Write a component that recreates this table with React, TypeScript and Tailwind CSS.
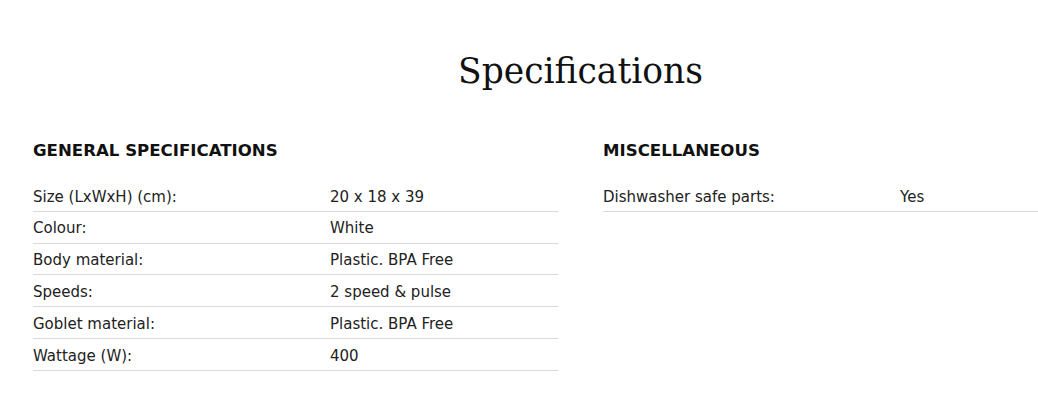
const general = [
  ["Size (LxWxH) (cm):", "20 x 18 x 39"],
  ["Colour:", "White"],
  ["Body material:", "Plastic. BPA Free"],
  ["Speeds:", "2 speed & pulse"],
  ["Goblet material:", "Plastic. BPA Free"],
  ["Wattage (W):", "400"],
];

const misc = [["Dishwasher safe parts:", "Yes"]];

function SpecTable({ title, rows }: { title: string; rows: string[][] }) {
  return (
    <div className="w-[525px] shrink-0">
      <h3 className="mt-[2px] text-[16.6px] font-bold uppercase text-[#111] leading-none h-[30px] flex items-center">
        {title}
      </h3>
      <div className="mt-[14px]">
        {rows.map(([label, value]) => (
          <div key={label} className="flex h-[31.8px] items-center pt-[3px] border-b border-[#d9d9d9] text-[15px] text-[#222]">
            <div className="w-[297px] shrink-0">{label}</div>
            <div>{value}</div>
          </div>
        ))}
      </div>
    </div>
  );
}

export default function App() {
  return (
    <div className="min-h-screen bg-white overflow-hidden font-['DejaVu_Sans',sans-serif]">
      <div className="ml-[33px] w-[1095px] pt-[46px]">
        <h2 className="text-center text-[34.5px] leading-[50px] text-[#111] font-['DejaVu_Serif',serif]">
          Specifications
        </h2>
        <div className="mt-[38px] flex gap-[45px]">
          <SpecTable title="General Specifications" rows={general} />
          <SpecTable title="Miscellaneous" rows={misc} />
        </div>
      </div>
    </div>
  );
}
